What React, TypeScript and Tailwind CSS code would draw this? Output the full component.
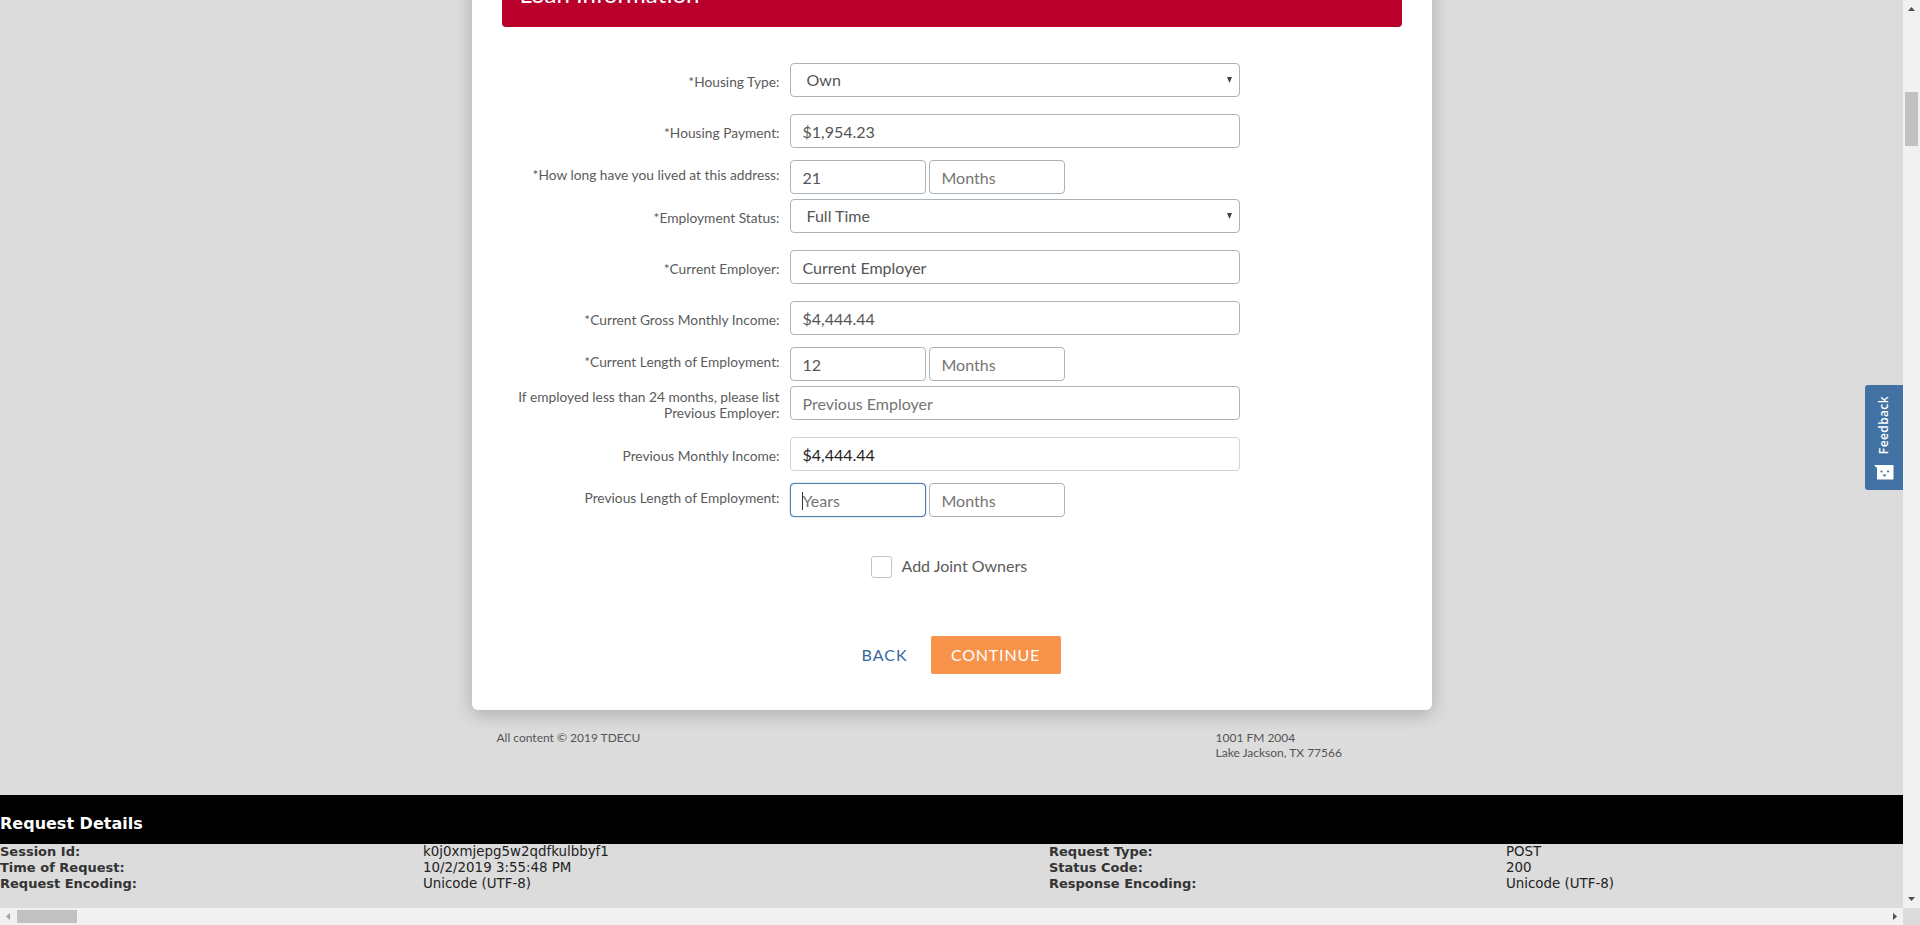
const lato = "font-['Lato','Open_Sans',sans-serif]";

type RowProps = {
  label: React.ReactNode;
  top: string;
  labelShift: string;
  children: React.ReactNode;
};

function Row({ label, top, labelShift, children }: RowProps) {
  return (
    <div className={`flex h-[34px] gap-[10px] ${top}`}>
      <label className={`w-[278px] text-right text-[13.75px] leading-4 text-[#5b5b5b] ${labelShift}`}>
        {label}
      </label>
      {children}
    </div>
  );
}

function TextBox({ value, placeholder, light, dark }: { value?: string; placeholder?: string; light?: boolean; dark?: boolean }) {
  return (
    <input
      readOnly
      value={value ?? ""}
      placeholder={placeholder}
      className={`h-[34px] w-[450px] rounded-[4px] border bg-white px-[12px] text-[16px] outline-none placeholder:text-[#757575] ${light ? "border-[#cfd4d7]" : "border-[#a9b3b9]"} ${dark ? "text-[#222222]" : "text-[#555555]"}`}
    />
  );
}

function SmallBox({ value, placeholder }: { value?: string; placeholder?: string }) {
  return (
    <input
      readOnly
      value={value ?? ""}
      placeholder={placeholder}
      className="h-[34px] w-[136px] rounded-[4px] border border-[#a9b3b9] bg-white px-[12px] text-[16px] text-[#555555] outline-none placeholder:text-[#757575]"
    />
  );
}

function SelectBox({ value }: { value: string }) {
  return (
    <div className="relative h-[34px] w-[450px]">
      <select
        defaultValue={value}
        className="h-full w-full appearance-none rounded-[4px] border border-[#a9b3b9] bg-white pl-[16px] text-[16px] text-[#555555] outline-none"
      >
        <option>{value}</option>
      </select>
      <svg className="absolute right-[8px] top-[14px]" width="5" height="6" viewBox="0 0 5 6">
        <path d="M0 0h5L2.5 6z" fill="#444444" />
      </svg>
    </div>
  );
}

function Feedback() {
  return (
    <div className="absolute right-0 top-[385px] flex h-[105px] w-[38px] flex-col items-center rounded-l-[3px] bg-[#4271a3] pt-[11px]">
      <span className="rotate-180 font-['Open_Sans',sans-serif] text-[12px] font-semibold leading-none tracking-[0.4px] text-white [writing-mode:vertical-rl]">
        Feedback
      </span>
      <svg className="mt-[11px]" width="20" height="15" viewBox="0 0 20 15">
        <path d="M0 0h19.5v14.5H3V3z" fill="#ffffff" />
        <circle cx="7.5" cy="6.5" r="1.1" fill="#4271a3" />
        <circle cx="14" cy="6.5" r="1.1" fill="#4271a3" />
        <path d="M8.5 9.5h4l-2 2.5z" fill="#4271a3" />
      </svg>
    </div>
  );
}

function RequestDetails() {
  const rows = [
    ["Session Id:", "k0j0xmjepg5w2qdfkulbbyf1", "Request Type:", "POST"],
    ["Time of Request:", "10/2/2019 3:55:48 PM", "Status Code:", "200"],
    ["Request Encoding:", "Unicode (UTF-8)", "Response Encoding:", "Unicode (UTF-8)"],
  ];
  return (
    <div className="font-['DejaVu_Sans',sans-serif]">
      <div className="flex h-[49px] items-end bg-black pb-[10px] text-[16px] font-bold leading-5 text-white">
        Request Details
      </div>
      <div className="h-[64px] text-[13.4px] leading-4 text-[#222222]">
        {rows.map((r) => (
          <div key={r[0]} className="grid grid-cols-[423px_626px_457px_1fr]">
            <b className="text-[13px] text-[#333333]">{r[0]}</b>
            <span>{r[1]}</span>
            <b className="text-[13px] text-[#333333]">{r[2]}</b>
            <span>{r[3]}</span>
          </div>
        ))}
      </div>
    </div>
  );
}

export default function App() {
  return (
    <div className={`flex h-screen flex-col overflow-hidden bg-[#dcdcdc] ${lato}`}>
      <div className="relative flex h-[908px] w-full">
        <div className="w-[1903px] overflow-hidden">
          {/* Card */}
          <div className="mx-auto -mt-[33px] h-[743px] w-[960px] rounded-b-[6px] bg-white px-[30px] shadow-[0_4px_18px_rgba(0,0,0,0.22)]">
            <div className="flex h-[60px] items-end rounded-b-[4px] bg-[#b9002c] pb-[21px] pl-[18px] text-[24px] leading-none text-white">
              Loan Information
            </div>

            <Row label="*Housing Type:" top="mt-[36px]" labelShift="pt-[11px]">
              <SelectBox value="Own" />
            </Row>
            <Row label="*Housing Payment:" top="mt-[17px]" labelShift="pt-[11px]">
              <TextBox value="$1,954.23" />
            </Row>
            <Row label="*How long have you lived at this address:" top="mt-[12px]" labelShift="pt-[7px]">
              <div className="flex gap-[3px]">
                <SmallBox value="21" />
                <SmallBox placeholder="Months" />
              </div>
            </Row>
            <Row label="*Employment Status:" top="mt-[5px]" labelShift="pt-[11px]">
              <SelectBox value="Full Time" />
            </Row>
            <Row label="*Current Employer:" top="mt-[17px]" labelShift="pt-[11px]">
              <TextBox value="Current Employer" />
            </Row>
            <Row label="*Current Gross Monthly Income:" top="mt-[17px]" labelShift="pt-[11px]">
              <TextBox value="$4,444.44" />
            </Row>
            <Row label="*Current Length of Employment:" top="mt-[12px]" labelShift="pt-[7px]">
              <div className="flex gap-[3px]">
                <SmallBox value="12" />
                <SmallBox placeholder="Months" />
              </div>
            </Row>
            <Row
              label={<>If employed less than 24 months, please list<br />Previous Employer:</>}
              top="mt-[5px]"
              labelShift="pt-[3px]"
            >
              <TextBox placeholder="Previous Employer" />
            </Row>
            <Row label="Previous Monthly Income:" top="mt-[17px]" labelShift="pt-[11px]">
              <TextBox value="$4,444.44" light dark />
            </Row>
            <Row label="Previous Length of Employment:" top="mt-[12px]" labelShift="pt-[7px]">
              <div className="flex gap-[3px]">
                <div className="relative">
                  <SmallBox placeholder="Years" />
                  <span className="pointer-events-none absolute inset-0 rounded-[4px] border border-[#4a82b4] shadow-[0_0_0_1px_rgba(74,130,180,0.15)]" />
                  <span className="absolute left-[12px] top-[9px] h-[18px] w-px bg-[#333333]" />
                </div>
                <SmallBox placeholder="Months" />
              </div>
            </Row>

            <div className="mt-[38px] flex h-[24px] items-center pl-[369px]">
              <span className="h-[22px] w-[21px] rounded-[3px] border border-[#c4c4c4] bg-white" />
              <span className="mb-[3px] ml-[10px] text-[16px] text-[#5b5b5b]">Add Joint Owners</span>
            </div>

            <div className="mt-[57px] flex items-center pl-[360px]">
              <a className="text-[16px] tracking-[1px] text-[#35689f]">BACK</a>
              <button className="ml-[23px] h-[38px] w-[130px] rounded-[2px] bg-[#f7934a] text-[16px] tracking-[0.8px] text-white">
                CONTINUE
              </button>
            </div>
          </div>

          {/* Footer */}
          <div className="mx-auto flex h-[85px] w-[960px] pl-[25px] pt-[20px] text-[12px] leading-[15px] text-[#555555]">
            <div className="w-[719px]">All content © 2019 TDECU</div>
            <div>
              1001 FM 2004
              <br />
              Lake Jackson, TX 77566
            </div>
          </div>

          <RequestDetails />
        </div>

        {/* Vertical scrollbar */}
        <div className="relative w-[17px] bg-[#f1f1f1]">
          <svg className="absolute left-[5px] top-[7px]" width="7" height="4" viewBox="0 0 7 4">
            <path d="M3.5 0L7 4H0z" fill="#505050" />
          </svg>
          <div className="absolute left-[2px] top-[92px] h-[54px] w-[13px] bg-[#c1c1c1]" />
          <svg className="absolute bottom-[7px] left-[5px]" width="7" height="4" viewBox="0 0 7 4">
            <path d="M0 0h7L3.5 4z" fill="#505050" />
          </svg>
        </div>

        <div className="absolute right-[17px] top-0">
          <Feedback />
        </div>
      </div>

      {/* Horizontal scrollbar */}
      <div className="flex h-[17px]">
        <div className="relative w-[1903px] bg-[#f1f1f1]">
          <svg className="absolute left-[6px] top-[5px]" width="4" height="7" viewBox="0 0 4 7">
            <path d="M4 0v7L0 3.5z" fill="#a3a3a3" />
          </svg>
          <div className="absolute left-[17px] top-[2px] h-[13px] w-[60px] bg-[#c1c1c1]" />
          <svg className="absolute right-[6px] top-[5px]" width="4" height="7" viewBox="0 0 4 7">
            <path d="M0 0v7l4-3.5z" fill="#505050" />
          </svg>
        </div>
        <div className="w-[17px] bg-[#dcdcdc]" />
      </div>
    </div>
  );
}
